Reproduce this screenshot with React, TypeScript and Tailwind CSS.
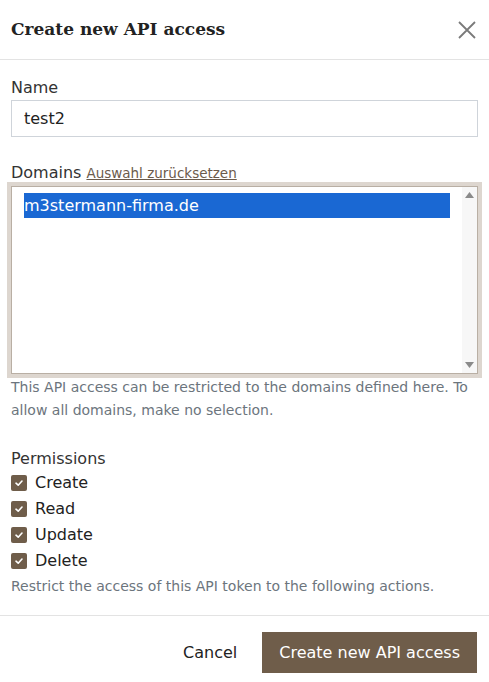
import React from "react";

const body = { fontFamily: '"DejaVu Sans", "Open Sans", sans-serif' };

function Check({ label }: { label: string }) {
  return (
    <div className="flex h-[26px] items-center gap-[8px]">
      <span className="flex h-[16px] w-[16px] items-center justify-center rounded-[2px] bg-[#6f5d4a]">
        <svg width="10" height="10" viewBox="0 0 10 10">
          <path d="M2 5.2 L4.2 7.2 L8 3" fill="none" stroke="white" strokeWidth="1.6" strokeLinecap="round" strokeLinejoin="round" />
        </svg>
      </span>
      <span className="text-[16px] text-[#222]">{label}</span>
    </div>
  );
}

export default function App() {
  return (
    <div className="h-[682px] w-[489px] bg-white text-[#333]" style={body}>
      <div className="flex h-[60px] items-center justify-between border-b border-[#e3e3e3] pl-[11px] pr-[11px]">
        <h1 className="text-[17px] font-bold text-[#222]" style={{ fontFamily: '"DejaVu Serif", "Liberation Serif", serif' }}>
          Create new API access
        </h1>
        <svg width="20" height="20" viewBox="0 0 20 20" className="mr-[1px]">
          <path d="M2 2 L18 18 M18 2 L2 18" stroke="#7a7a7a" strokeWidth="1.8" />
        </svg>
      </div>

      <div className="px-[11px] pt-[16px]">
        <div className="h-[24px] text-[16px] leading-[24px] text-[#333]">Name</div>
        <div className="flex h-[37px] items-center border border-[#cfd4da] px-[12px] text-[16px] text-[#222]">test2</div>

        <div className="mt-[24px] flex h-[24px] items-baseline gap-[5px] leading-[24px]">
          <span className="text-[16px] text-[#333]">Domains</span>
          <span className="text-[13.5px] text-[#6b5b4b] underline">Auswahl zurücksetzen</span>
        </div>

        <div className="-mx-[4px] -mt-[3px] border-[4px] border-[#ddd6cf]">
          <div className="flex h-[188px] border border-[#b9afa4] bg-white">
            <div className="flex-1 pl-[12px] pr-[12px] pt-[6px]">
              <div className="flex h-[25px] items-center bg-[#1a68d3] text-[16px] text-white">m3stermann-firma.de</div>
            </div>
            <div className="flex w-[15px] flex-col items-center justify-between bg-[#f7f7f7] py-[5px]">
              <svg width="9" height="6" viewBox="0 0 9 6"><path d="M4.5 0 L9 6 L0 6 Z" fill="#8a8a8a" /></svg>
              <svg width="9" height="6" viewBox="0 0 9 6"><path d="M0 0 L9 0 L4.5 6 Z" fill="#8a8a8a" /></svg>
            </div>
          </div>
        </div>

        <p className="-mt-[2px] text-[14px] leading-[23px] text-[#6c757d]">
          This API access can be restricted to the domains defined here. To allow all domains, make no selection.
        </p>

        <div className="mt-[25px] h-[24px] text-[16px] leading-[24px] text-[#333]">Permissions</div>
        <div className="-mt-[1px]">
          <Check label="Create" />
          <Check label="Read" />
          <Check label="Update" />
          <Check label="Delete" />
        </div>
        <p className="mt-[1px] text-[14px] leading-[23px] text-[#6c757d]">Restrict the access of this API token to the following actions.</p>
      </div>

      <div className="mt-[17px] flex items-center justify-end gap-[25px] border-t border-[#e3e3e3] px-[12px] pt-[16px]">
        <span className="text-[16px] text-[#222]">Cancel</span>
        <span className="flex h-[41px] items-center bg-[#6f5d4a] px-[17px] text-[16px] text-white">Create new API access</span>
      </div>
    </div>
  );
}
